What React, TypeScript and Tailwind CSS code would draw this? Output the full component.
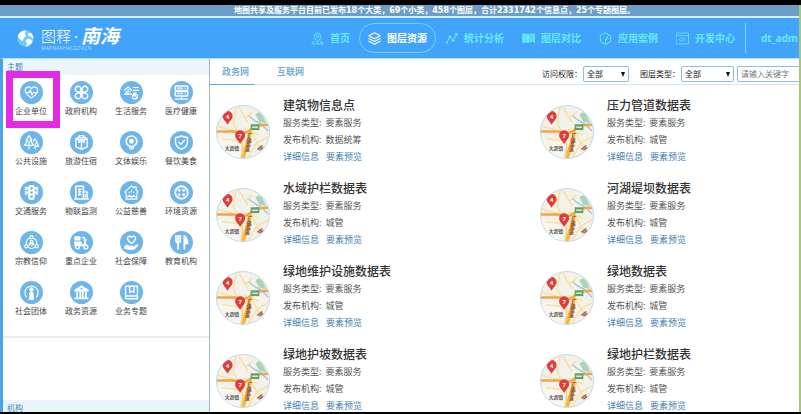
import type { ReactNode } from "react";

const s = {
  fill: "none",
  stroke: "currentColor",
  strokeWidth: 1.8,
  strokeLinecap: "round" as const,
  strokeLinejoin: "round" as const,
};

function Glyph({ children, size = "size-[13px]" }: { children: ReactNode; size?: string }) {
  return (
    <svg viewBox="0 0 24 24" className={`${size} shrink-0`} aria-hidden="true" {...s}>
      {children}
    </svg>
  );
}

const topics: { name: string; icon: ReactNode }[] = [
  {
    name: "企业单位",
    icon: (
      <>
        <path d="M12 21C5 16 2 12.500 2 8.500A5.300 5.300 0 0 1 12 6a5.300 5.300 0 0 1 10 2.500C22 12.500 19 16 12 21Z" />
        <path d="M2.500 12H8l2-4 3 8 2-4h6.500" />
      </>
    ),
  },
  {
    name: "政府机构",
    icon: (
      <>
        <path d="M11 11H7a4.500 4.500 0 1 1 4-4.500ZM13 11h4a4.500 4.500 0 1 0-4-4.500ZM11 13H7a4.500 4.500 0 1 0 4 4.500ZM13 13h4a4.500 4.500 0 1 1-4 4.500Z" strokeWidth="2.200" />
      </>
    ),
  },
  {
    name: "生活服务",
    icon: (
      <>
        <path d="M1 8 6.500 3 12 8M6.500 7v7M6.500 10H10M3.500 10v4M1 14.500h11M15 4h8M15 8.500h8M15 13h4" />
        <circle cx="17.500" cy="18.500" r="5" fill="currentColor" stroke="none" />
        <path d="m15 18.500 2 2 3.500-3.500" stroke="#70b5ea" />
      </>
    ),
  },
  {
    name: "医疗健康",
    icon: (
      <>
        <rect x="2" y="1.500" width="20" height="7" rx="1" strokeWidth="2.200" />
        <rect x="2" y="10.500" width="20" height="7" rx="1" strokeWidth="2.200" />
        <path d="M5.500 5h8M5.500 14h8M18 5h.5M18 14h.5M12 18v4M2 22.500h20" />
      </>
    ),
  },
  {
    name: "公共设施",
    icon: (
      <>
        <path d="M8 1 3.500 8H6l-5 8.500h14L10 8h2.500ZM8 10v12" strokeWidth="2" />
        <path d="m15 10 2.500-4 3.500 5.500h-1.500L23.500 18H17M18 14v8" strokeWidth="2" />
      </>
    ),
  },
  {
    name: "旅游住宿",
    icon: (
      <>
        <path d="M12 8 3 6v13l9 4 9-4V6ZM12 8v15M3 6l5-3 4 2 4-2 5 3M8.500 3V1h7v2" strokeWidth="2.200" />
        <path d="m7 7 1 5 4-3 4 3 1-5" />
      </>
    ),
  },
  {
    name: "文体娱乐",
    icon: (
      <>
        <circle cx="12" cy="10" r="8.500" strokeWidth="2.600" />
        <circle cx="12" cy="10" r="3" fill="currentColor" />
        <path d="M9 21h6M10.500 24h3M9 18v3M15 18v3" />
      </>
    ),
  },
  {
    name: "餐饮美食",
    icon: (
      <>
        <path d="M12 1.500c3 2 6 2.500 9.500 2.500v8c0 5-4 8.500-9.500 11-5.500-2.500-9.500-6-9.500-11V4C6 4 9 3.500 12 1.500Z" strokeWidth="2.200" />
        <path d="m7.500 11.500 3.500 3.500 6-6.500" strokeWidth="2.200" />
      </>
    ),
  },
  {
    name: "交通服务",
    icon: (
      <>
        <rect x="7.500" y="1" width="9" height="22" rx="3" fill="currentColor" />
        <path d="M2 4h3c0 2-1 3.500-3 3.500M2 11h3c0 2-1 3.500-3 3.500M22 4h-3c0 2 1 3.500 3 3.500M22 11h-3c0 2 1 3.500 3 3.500M3 4.500h3M3 11.500h3M18 4.500h3M18 11.500h3" strokeWidth="2.200" />
        <g fill="#70b5ea" stroke="none">
          <circle cx="12" cy="5.500" r="2.100" />
          <circle cx="12" cy="12" r="2.100" />
          <circle cx="12" cy="18.500" r="2.100" />
        </g>
      </>
    ),
  },
  {
    name: "物联监测",
    icon: (
      <>
        <path d="M3 22V2h12v20M15 11h6v11M1 22.500h22" strokeWidth="2.300" />
        <path d="M7 6.500h4M7 11h4M7 15.500h4M9 6v10M18 15v4" strokeWidth="2" />
      </>
    ),
  },
  {
    name: "公益慈善",
    icon: (
      <>
        <path d="M1.500 11 12 1.500 16 5V3h3.500v5l3 3-2 2v9.500h-17V13Z" />
        <path d="M8 11.500h1M15 11.500h1M8 16c2 3 6 3 8 0M12 8v3M5.500 19c2-2 4-1 6.500 1 2.500-2 4.500-3 6.500-1" />
      </>
    ),
  },
  {
    name: "环境资源",
    icon: (
      <>
        <circle cx="12" cy="12" r="10" strokeWidth="3" />
        <g fill="currentColor" stroke="none">
          <circle cx="8.500" cy="8.500" r="2.300" />
          <circle cx="15.500" cy="8.500" r="2.300" />
          <circle cx="8.500" cy="15.500" r="2.300" />
          <circle cx="15.500" cy="15.500" r="2.300" />
        </g>
      </>
    ),
  },
  {
    name: "宗教信仰",
    icon: (
      <>
        <circle cx="12" cy="13" r="8.500" />
        <g fill="#70b5ea">
          <circle cx="12" cy="3.500" r="2.500" />
          <circle cx="3.500" cy="18" r="2.500" />
          <circle cx="20.500" cy="18" r="2.500" />
        </g>
        <path d="M8 16c0-2 1.500-3 4-3s4 1 4 3ZM10 10.500a2 2 0 1 0 4 0 2 2 0 1 0-4 0" />
      </>
    ),
  },
  {
    name: "重点企业",
    icon: (
      <>
        <path d="M1.500 3h8v5h-8Z" fill="currentColor" />
        <path d="M1 11.500h10v5h4L18 13 16 4h-2.500M16.500 8h3" strokeWidth="2.600" />
        <path d="M1.500 12h9v5h-9Z" fill="currentColor" />
        <circle cx="5.500" cy="19" r="3" fill="#70b5ea" strokeWidth="2.300" />
        <circle cx="19" cy="19" r="3" fill="#70b5ea" strokeWidth="2.300" />
      </>
    ),
  },
  {
    name: "社会保障",
    icon: (
      <>
        <path d="M12 13.500C8 10.500 5.500 8.500 5.500 5.500A3.400 3.400 0 0 1 12 4a3.400 3.400 0 0 1 6.500 1.500c0 3-2.500 5-6.500 8Z" strokeWidth="2.300" />
        <path d="M1 17.500c3-2 5-2 7 0h5c2 0 1.500 2-.5 2H9h5l6-4c2-1 3 .5 2 2l-6 5.500H6L1 21.500Z" fill="currentColor" strokeWidth="1" />
      </>
    ),
  },
  {
    name: "教育机构",
    icon: (
      <>
        <path d="M3 1v8c0 2 1.500 3 3.500 3S10 11 10 9V1M6.500 1v21" strokeWidth="2.800" />
        <path d="M16.500 22V1.500c4 2 5 6 5 12h-5" fill="currentColor" strokeWidth="2.800" />
      </>
    ),
  },
  {
    name: "社会团体",
    icon: (
      <>
        <path d="M4 19A10.500 10.500 0 1 1 20 19" />
        <circle cx="12" cy="7" r="2.500" fill="currentColor" />
        <path d="m11 11 3 1 1 11H8l2-5-1-4Z" fill="currentColor" />
      </>
    ),
  },
  {
    name: "政务资源",
    icon: (
      <>
        <path d="M12 1.500 1.500 8v1.500h21V8Z" fill="currentColor" />
        <path d="M5 11v8M10 11v8M14 11v8M19 11v8M2 21.500h20" strokeWidth="2.800" />
        <circle cx="12" cy="6" r="1.500" fill="#70b5ea" stroke="none" />
      </>
    ),
  },
  {
    name: "业务专题",
    icon: (
      <>
        <path d="M2.500 2h19v20h-17a2 2 0 0 1-2-2ZM2.500 17.500h19" strokeWidth="2.200" />
        <path d="M9 2v10l3.500-2.500L16 12V2" strokeWidth="2.200" />
      </>
    ),
  },
];

const navItems: { name: string; icon: ReactNode; active?: boolean }[] = [
  {
    name: "首页",
    icon: (
      <>
        <path d="M12 19C8 14 6 11.500 6 8a6 6 0 0 1 12 0c0 3.500-2 6-6 11Z" />
        <circle cx="12" cy="8" r="2.300" />
        <path d="M6.500 18H4l-2.500 4h21L20 18h-2.500" />
      </>
    ),
  },
  {
    name: "图层资源",
    active: true,
    icon: <path d="m12 1.500 10.500 5.500L12 12.500 1.500 7ZM1.500 12 12 17.500 22.500 12M1.500 17 12 22.500 22.500 17" strokeWidth="2" />,
  },
  {
    name: "统计分析",
    icon: (
      <>
        <path d="m3 20 6-11 6 6 6-10" />
        <g fill="currentColor">
          <circle cx="3" cy="20" r="1" />
          <circle cx="9" cy="8.500" r="1.500" />
          <circle cx="15" cy="16" r="1.500" />
          <circle cx="21" cy="4.500" r="2" />
        </g>
      </>
    ),
  },
  {
    name: "图层对比",
    icon: (
      <>
        <path d="M1 4h5v15H1ZM8.500 4H13v15H8.500Z" fill="currentColor" />
        <path d="M15.500 4H23v15h-1l-3-4-3 4h-.5Z" fill="currentColor" fillOpacity="0.7" />
      </>
    ),
  },
  {
    name: "应用案例",
    icon: <path d="M12 1.500 21.500 7v10.500L12 23l-9.500-5.500V7ZM12 23v-9l5-7M12 14l5-2" />,
  },
  {
    name: "开发中心",
    icon: <path d="M1 2h22v20H1ZM1 7h22M9 11l-3 3 3 3M15 11l3 3-3 3M13 11l-2 6" strokeWidth="1.500" />,
  },
];

const layers = [
  { title: "建筑物信息点", org: "数据统筹" },
  { title: "压力管道数据表", org: "城管" },
  { title: "水域护栏数据表", org: "城管" },
  { title: "河湖堤坝数据表", org: "城管" },
  { title: "绿地维护设施数据表", org: "城管" },
  { title: "绿地数据表", org: "城管" },
  { title: "绿地护坡数据表", org: "城管" },
  { title: "绿地护栏数据表", org: "城管" },
];

function Pin({ x, y, label }: { x: number; y: number; label: string }) {
  return (
    <g transform={`translate(${x} ${y})`}>
      <path d="M0 8.500C-2 5-5.200 3-5.200-.5a5.200 5.200 0 0 1 10.400 0C5.200 3 2 5 0 8.500Z" fill="#df3d38" />
      <text y="2" textAnchor="middle" fontSize="6" fontWeight="700" fill="#fff">
        {label}
      </text>
    </g>
  );
}

function MapThumb() {
  return (
    <svg
      viewBox="0 0 54 54"
      className="mt-[7px] size-[54px] shrink-0 rounded-full border border-[#bcdcec] bg-[#f4f0ea]"
      role="img"
      aria-label="地图"
    >
      <path d="M40 9c3-4 6-3 9 4l2 5-7-2Z" fill="#a9d4b8" />
      <path d="M0 33c9-3 15 1 20 6s2 9 4 15H4Z" fill="#f9f6f0" />
      <g fill="none">
        <path d="m20 0-3 18 4 8M22 0l10 17M43 30 28 24M0 21l20 5M32 54l9-15 12-7M35 26l8 15 9 5M5 34l17 2M37 6l-8 7" stroke="#f5e196" strokeWidth="1.300" />
        <path d="M33 10c4 5 8 6 12 8l8 8" stroke="#9fc8de" strokeWidth="1.500" />
        <path d="M0 26.500h17c7 0 12 4 18-2 5-5 10-5 19-5" stroke="#f0a548" strokeWidth="2.600" />
        <path d="M34 26c0 9-4 16-7 28" stroke="#f3b54c" strokeWidth="4" />
        <path d="M20 29c7 7 8 10 5 25" stroke="#f5d56c" strokeWidth="1.700" />
      </g>
      <rect x="35" y="19" width="9" height="6" fill="#63a267" />
      <path d="M36.500 22h6" stroke="#d5ead0" strokeWidth="1.500" />
      <g fill="#8e4a1c" fontSize="5" fontWeight="700">
        <text x="32" y="32">广</text>
        <text x="31" y="37">佛</text>
        <text x="30" y="42">高</text>
        <text x="29" y="47">速</text>
      </g>
      <path d="m42 45 5-4M44 46l4-3" stroke="#9c5944" strokeWidth="1.500" />
      <text x="8" y="46" fontSize="5" fontWeight="700" fill="#555">
        大沥镇
      </text>
      <Pin x={11} y={11} label="4" />
      <Pin x={24} y={31} label="7" />
    </svg>
  );
}

function Filter({ id, label, width }: { id: string; label: string; width: string }) {
  return (
    <div className="flex shrink-0 items-center gap-px">
      <label htmlFor={id} className="whitespace-nowrap">
        {label}
      </label>
      <div className={`relative ${width}`}>
        <select
          id={id}
          className="block h-4 w-full appearance-none rounded-xs border border-[#8fbfd6] bg-white pl-[3px] text-[8px] text-[#222]"
        >
          <option>全部</option>
        </select>
        <svg viewBox="0 0 4 5" className="pointer-events-none absolute top-[6px] right-1 h-[5px] w-1" aria-hidden="true">
          <path d="M0 0h4L2 5Z" fill="#111" />
        </svg>
      </div>
    </div>
  );
}

export default function App() {
  return (
    <div className="flex h-screen flex-col overflow-hidden border-t-[5px] border-b-2 border-black bg-white font-['Noto_Sans','Noto_Sans_CJK_SC',sans-serif]">
      <div className="flex min-h-0 flex-1 flex-col border-r-2 border-[#a3c878]">
        <p className="h-[11px] shrink-0 overflow-hidden bg-[#6b9ec6] pl-[234px] font-['DejaVu_Sans','Noto_Sans_CJK_SC',sans-serif] text-[8px] leading-[11px] font-bold whitespace-nowrap text-white">
          地图共享及服务平台目前已发布18个大类，69个小类，458个图层，合计2331742个信息点，25个专题图层。
        </p>

        <header className="flex h-[42px] shrink-0 items-center border-t-2 border-[#d3f0fc] bg-[#42a3fa] pl-[17px]">
          <a href="#home" className="flex shrink-0 items-center gap-[7px] text-white">
            <svg viewBox="0 0 24 24" className="size-[17px]" aria-hidden="true">
              <circle cx="12" cy="12" r="11.500" fill="#72c8f4" />
              <path d="M2 6c3-4 7-6 11-5l-2 4 2 3-4 4-1 4-4-3-3-4ZM16 4l5 1 2.500 6-2 1-2-3-4-1ZM12 14l5-2 5 4c-2 4-5 7-9 7.500l1-5Z" fill="#fff" />
            </svg>
            <span className="flex flex-col">
              <span className="flex h-5 items-center text-[15px] leading-5 font-light whitespace-nowrap">
                图释<b className="w-[10px] text-center">·</b>
                <em className="text-[19px] font-bold">南海</em>
              </span>
              <span className="text-[5px] leading-[5px] text-[#a5dcfa]">MAP.NANHAI.GOV.CN</span>
            </span>
          </a>
          <nav className="ml-auto flex shrink-0 items-center">
            {navItems.map((item) => (
              <a
                key={item.name}
                href="#nav"
                aria-current={item.active ? "page" : undefined}
                className={`flex h-[30px] items-center gap-1.5 rounded-full border px-2 text-[10px] font-bold whitespace-nowrap ${
                  item.active ? "border-[#70d2fb] text-white" : "border-transparent text-[#64eafa]"
                }`}
              >
                <Glyph>{item.icon}</Glyph>
                {item.name}
              </a>
            ))}
          </nav>
          <a
            href="#user"
            className="ml-px flex h-[30px] w-[54px] shrink-0 items-center border-l border-[#70e2fb] pl-[15px] text-[10px] font-bold text-[#64eafa]"
          >
            dt_adm
          </a>
        </header>

        <div className="flex min-h-0 flex-1 border-t border-l-[3px] border-t-[#b5e0fa] border-l-[#4ba1ea]">
          <aside className="flex w-[207px] shrink-0 flex-col border-r border-[#9fb4c2]">
            <h2 className="h-4 shrink-0 bg-[#ebf5fc] pl-1 text-[8px] leading-4 text-[#4387b5]">主题</h2>
            <ul className="grid shrink-0 grid-cols-4 border-b-2 border-[#e7ecf0] px-[3px] pt-[6px] pb-[5px]">
              {topics.map((topic, i) => (
                <li key={topic.name} className="relative flex h-[50px] justify-center">
                  {i === 0 && (
                    <span className="pointer-events-none absolute -top-[10px] left-0 h-[57px] w-[54px] border-[7px] border-[#e32be3]" />
                  )}
                  <a href="#topic" className="flex flex-col items-center gap-px">
                    <span className="flex size-[23px] items-center justify-center rounded-full bg-[#70b5ea] text-white">
                      <Glyph size="size-[15px]">{topic.icon}</Glyph>
                    </span>
                    <span className="text-[8px] leading-3 whitespace-nowrap text-[#444]">{topic.name}</span>
                  </a>
                </li>
              ))}
            </ul>
            <h2 className="mt-auto h-3 shrink-0 overflow-hidden bg-[#e9f5fb] pl-1 text-[8px] leading-4 text-[#4387b5]">
              机构
            </h2>
          </aside>

          <main className="flex min-w-0 flex-1 flex-col">
            <div className="flex h-[26px] shrink-0 border-b border-[#dbe6ed]">
              <div role="tablist" className="-mb-px flex gap-[11px] text-[9px] font-medium text-[#5f9fca]">
                <button role="tab" aria-selected="true" className="border-b border-[#5ba4d3] pr-[5px] pl-3 whitespace-nowrap">
                  政务网
                </button>
                <button role="tab" aria-selected="false" className="pr-[5px] pl-3 whitespace-nowrap">
                  互联网
                </button>
              </div>
              <form className="ml-auto flex items-center pt-1 text-[8px] text-[#222]">
                <Filter id="access" label="访问权限：" width="w-[46px]" />
                <div className="ml-[11px]">
                  <Filter id="kind" label="图层类型：" width="w-[53px]" />
                </div>
                <input
                  type="text"
                  aria-label="关键字"
                  placeholder="请输入关键字"
                  className="ml-[3px] h-4 w-[62px] rounded-l-xs border border-r-0 border-[#8fbfd6] pl-[3px] text-[8px] placeholder:text-[#777]"
                />
              </form>
            </div>

            <div className="min-h-0 flex-1 overflow-hidden pt-[13px]">
              <div className="grid grid-cols-[55%_45%] gap-y-4">
                {layers.map((layer) => (
                  <article key={layer.title} className="flex gap-[13px] pl-1.5">
                    <MapThumb />
                    <div className="text-[9px] leading-[17px] whitespace-nowrap text-[#555]">
                      <h3 className="text-xs leading-4 font-medium text-[#333]">{layer.title}</h3>
                      <p className="flex gap-1">
                        <span>服务类型:</span>
                        <span>要素服务</span>
                      </p>
                      <p className="flex gap-1">
                        <span>发布机构:</span>
                        <span>{layer.org}</span>
                      </p>
                      <p className="flex gap-[7px] text-[#3f80b0]">
                        <a href="#detail">详细信息</a>
                        <a href="#preview">要素预览</a>
                      </p>
                    </div>
                  </article>
                ))}
              </div>
            </div>
          </main>
        </div>
      </div>
    </div>
  );
}
